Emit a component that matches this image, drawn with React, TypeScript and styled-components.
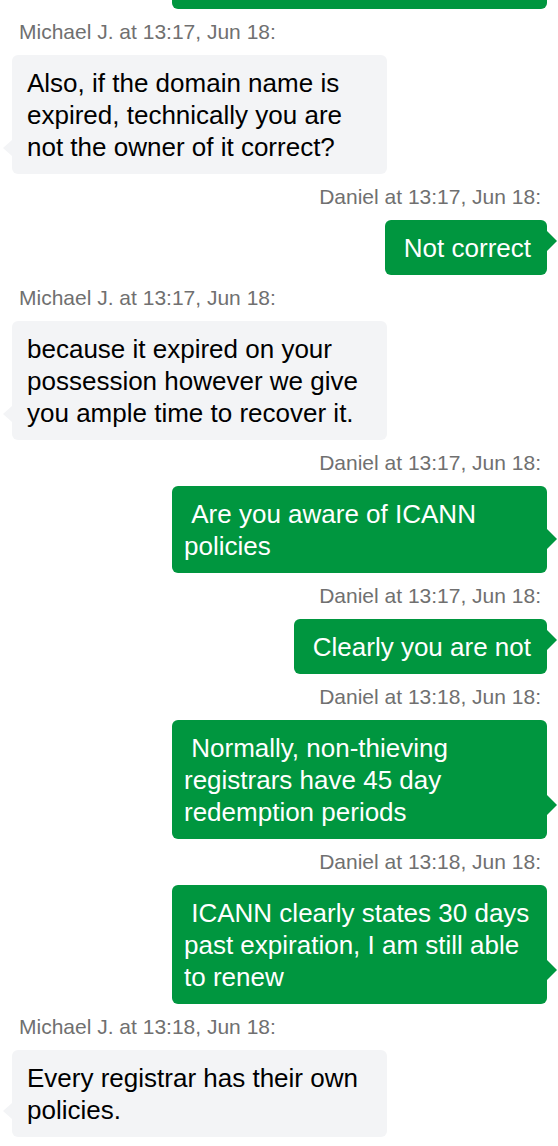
import React from "react";
import styled, { createGlobalStyle, css } from "styled-components";

const GlobalStyle = createGlobalStyle`
  html, body {
    margin: 0;
    padding: 0;
    background: #ffffff;
  }
  body {
    font-family: "Liberation Sans", Arial, Helvetica, sans-serif;
    overflow: hidden;
  }
`;

const Thread = styled.div`
  display: flex;
  flex-direction: column;
  width: 558px;
  height: 1146px;
  overflow: hidden;
  box-sizing: border-box;
  padding: 0 11px 0 12px;
`;

const Scroll = styled.div`
  display: flex;
  flex-direction: column;
  margin-top: -78px;
`;

const Group = styled.div<{ $mine?: boolean }>`
  display: flex;
  flex-direction: column;
  align-items: ${(p) => (p.$mine ? "flex-end" : "flex-start")};
`;

const Meta = styled.div<{ $mine?: boolean }>`
  font-size: 21px;
  line-height: 22px;
  color: #707070;
  padding-top: 12px;
  margin-bottom: 12px;
  ${(p) =>
    p.$mine
      ? css`
          padding-right: 6px;
        `
      : css`
          padding-left: 7px;
        `}
`;

const Bubble = styled.div<{ $mine?: boolean }>`
  position: relative;
  box-sizing: border-box;
  max-width: 375px;
  font-size: 26px;
  line-height: 32px;
  border-radius: 6px;
  white-space: pre-wrap;
  ${(p) =>
    p.$mine
      ? css`
          background: #00963f;
          color: #ffffff;
          padding: 12px 16px 11px 12px;
        `
      : css`
          background: #f3f4f6;
          color: #000000;
          padding: 12px 16px 11px 15px;
        `}
`;

const Tail = styled.span<{ $mine?: boolean }>`
  position: absolute;
  width: 0;
  height: 0;
  border-style: solid;
  ${(p) =>
    p.$mine
      ? css`
          right: -10px;
          bottom: 24px;
          border-width: 10px 0 10px 10px;
          border-color: transparent transparent transparent #00963f;
        `
      : css`
          left: -9px;
          bottom: 18px;
          border-width: 8px 9px 8px 0;
          border-color: transparent #f3f4f6 transparent transparent;
        `}
`;

type Msg = { mine: boolean; meta: string; text: string };

const messages: Msg[] = [
  { mine: false, meta: "Michael J. at 13:17, Jun 18:", text: "Also, if the domain name is expired, technically you are not the owner of it correct?" },
  { mine: true, meta: "Daniel at 13:17, Jun 18:", text: " Not correct" },
  { mine: false, meta: "Michael J. at 13:17, Jun 18:", text: "because it expired on your possession however we give you ample time to recover it." },
  { mine: true, meta: "Daniel at 13:17, Jun 18:", text: " Are you aware of ICANN policies" },
  { mine: true, meta: "Daniel at 13:17, Jun 18:", text: " Clearly you are not" },
  { mine: true, meta: "Daniel at 13:18, Jun 18:", text: " Normally, non-thieving registrars have 45 day redemption periods" },
  { mine: true, meta: "Daniel at 13:18, Jun 18:", text: " ICANN clearly states 30 days past expiration, I am still able to renew" },
  { mine: false, meta: "Michael J. at 13:18, Jun 18:", text: "Every registrar has their own policies." },
];

export default function App() {
  return (
    <>
      <GlobalStyle />
      <Thread>
        <Scroll>
          <Group $mine>
            <Bubble $mine style={{ width: 375 }}>
              {" \n "}
              <Tail $mine />
            </Bubble>
          </Group>
          {messages.map((m, i) => (
            <Group key={i} $mine={m.mine}>
              <Meta $mine={m.mine}>{m.meta}</Meta>
              <Bubble $mine={m.mine}>
                {m.text}
                <Tail $mine={m.mine} />
              </Bubble>
            </Group>
          ))}
        </Scroll>
      </Thread>
    </>
  );
}
